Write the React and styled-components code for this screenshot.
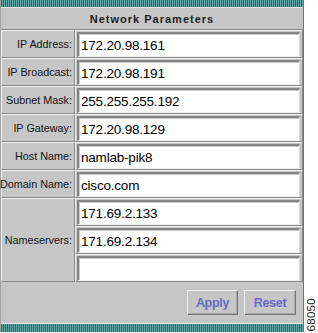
import React from "react";
import styled, { createGlobalStyle } from "styled-components";

const Global = createGlobalStyle`
  html, body { margin: 0; padding: 0; background: #ffffff; }
  body { font-family: "Liberation Sans", Arial, sans-serif; }
`;

const Frame = styled.div`
  width: 318px;
  height: 333px;
  display: flex;
  background: #ffffff;
`;

const Panel = styled.div`
  width: 304px;
  height: 332px;
  box-sizing: border-box;
  display: flex;
  flex-direction: column;
  background: #c6c6c6;
  border-left: 1px solid #a4a4a4;
  border-right: 1px solid #707070;
`;

const TealBar = styled.div`
  height: ${(p) => p.$h}px;
  flex: none;
  background: repeating-linear-gradient(
    90deg,
    #17706f 0px,
    #17706f 1px,
    #64a9a8 1px,
    #64a9a8 2px
  );
  border-${(p) => (p.$bottom ? "top" : "bottom")}: 1px solid #e6e6e6;
`;

const Header = styled.div`
  height: 22px;
  flex: none;
  box-sizing: border-box;
  border-bottom: 1px solid #8a8a8a;
  display: flex;
  align-items: center;
  justify-content: center;
  font-size: 11px;
  font-weight: bold;
  letter-spacing: 1px;
  color: #1e1e1e;
`;

const Grid = styled.div`
  display: grid;
  grid-template-columns: 74px 1fr;
  grid-auto-rows: 28px;
  flex: none;
`;

const Cell = styled.div`
  box-sizing: border-box;
  border-top: 1px solid #f0f0f0;
  border-left: 1px solid #f0f0f0;
  border-bottom: 1px solid #8a8a8a;
  border-right: 1px solid #8a8a8a;
  grid-row: span ${(p) => p.$span || 1};
`;

const LabelCell = styled(Cell)`
  display: flex;
  align-items: center;
  justify-content: flex-end;
  padding-right: 2px;
  font-size: 10.8px;
  color: #141414;
  white-space: nowrap;
`;

const FieldCell = styled(Cell)`
  padding: 1px 2px 0 1px;
  display: flex;
  align-items: center;
`;

const Field = styled.div`
  box-sizing: border-box;
  width: 100%;
  height: 25px;
  background: #ffffff;
  border-top: 2px solid #858585;
  border-left: 2px solid #858585;
  border-bottom: 1px solid #eeeeee;
  border-right: 1px solid #dcdcdc;
  box-shadow: inset 1px 1px 0 #c8c8c8;
  display: flex;
  align-items: center;
  padding-left: 2px;
  font-size: 13.5px;
  letter-spacing: -0.2px;
  color: #000000;
  white-space: nowrap;
  overflow: hidden;
`;

const Footer = styled.div`
  flex: 1;
  display: flex;
  justify-content: flex-end;
  align-items: flex-start;
  gap: 6px;
  padding: 8px 7px 0 0;
`;

const Button = styled.button`
  box-sizing: border-box;
  height: 25px;
  width: ${(p) => p.$w}px;
  padding: 0;
  background: #c6c6c6;
  border-top: 1px solid #f2f2f2;
  border-left: 1px solid #f2f2f2;
  border-bottom: 1px solid #777777;
  border-right: 1px solid #777777;
  box-shadow: inset -1px -1px 0 #a8a8a8;
  font-family: "Liberation Sans", Arial, sans-serif;
  font-size: 12.5px;
  letter-spacing: -0.3px;
  font-weight: bold;
  color: #6a68c8;
  cursor: pointer;
`;

const Side = styled.div`
  flex: 1;
  display: flex;
  flex-direction: column;
  justify-content: flex-end;
  align-items: center;
  padding-bottom: 2px;
`;

const Code = styled.span`
  writing-mode: vertical-rl;
  transform: rotate(180deg);
  font-size: 11.5px;
  color: #222222;
  letter-spacing: 0.3px;
`;

const rows = [
  ["IP Address:", "172.20.98.161"],
  ["IP Broadcast:", "172.20.98.191"],
  ["Subnet Mask:", "255.255.255.192"],
  ["IP Gateway:", "172.20.98.129"],
  ["Host Name:", "namlab-pik8"],
  ["Domain Name:", "cisco.com"],
];

const nameservers = ["171.69.2.133", "171.69.2.134", ""];

export default function App() {
  return (
    <>
      <Global />
      <Frame>
        <Panel>
          <TealBar $h={7} />
          <Header>Network Parameters</Header>
          <Grid>
            {rows.map(([label, value]) => (
              <React.Fragment key={label}>
                <LabelCell>{label}</LabelCell>
                <FieldCell>
                  <Field>{value}</Field>
                </FieldCell>
              </React.Fragment>
            ))}
            <LabelCell $span={3}>Nameservers:</LabelCell>
            {nameservers.map((v, i) => (
              <FieldCell key={i}>
                <Field>{v}</Field>
              </FieldCell>
            ))}
          </Grid>
          <Footer>
            <Button $w={51}>Apply</Button>
            <Button $w={52}>Reset</Button>
          </Footer>
          <TealBar $h={8} $bottom />
        </Panel>
        <Side>
          <Code>68050</Code>
        </Side>
      </Frame>
    </>
  );
}
